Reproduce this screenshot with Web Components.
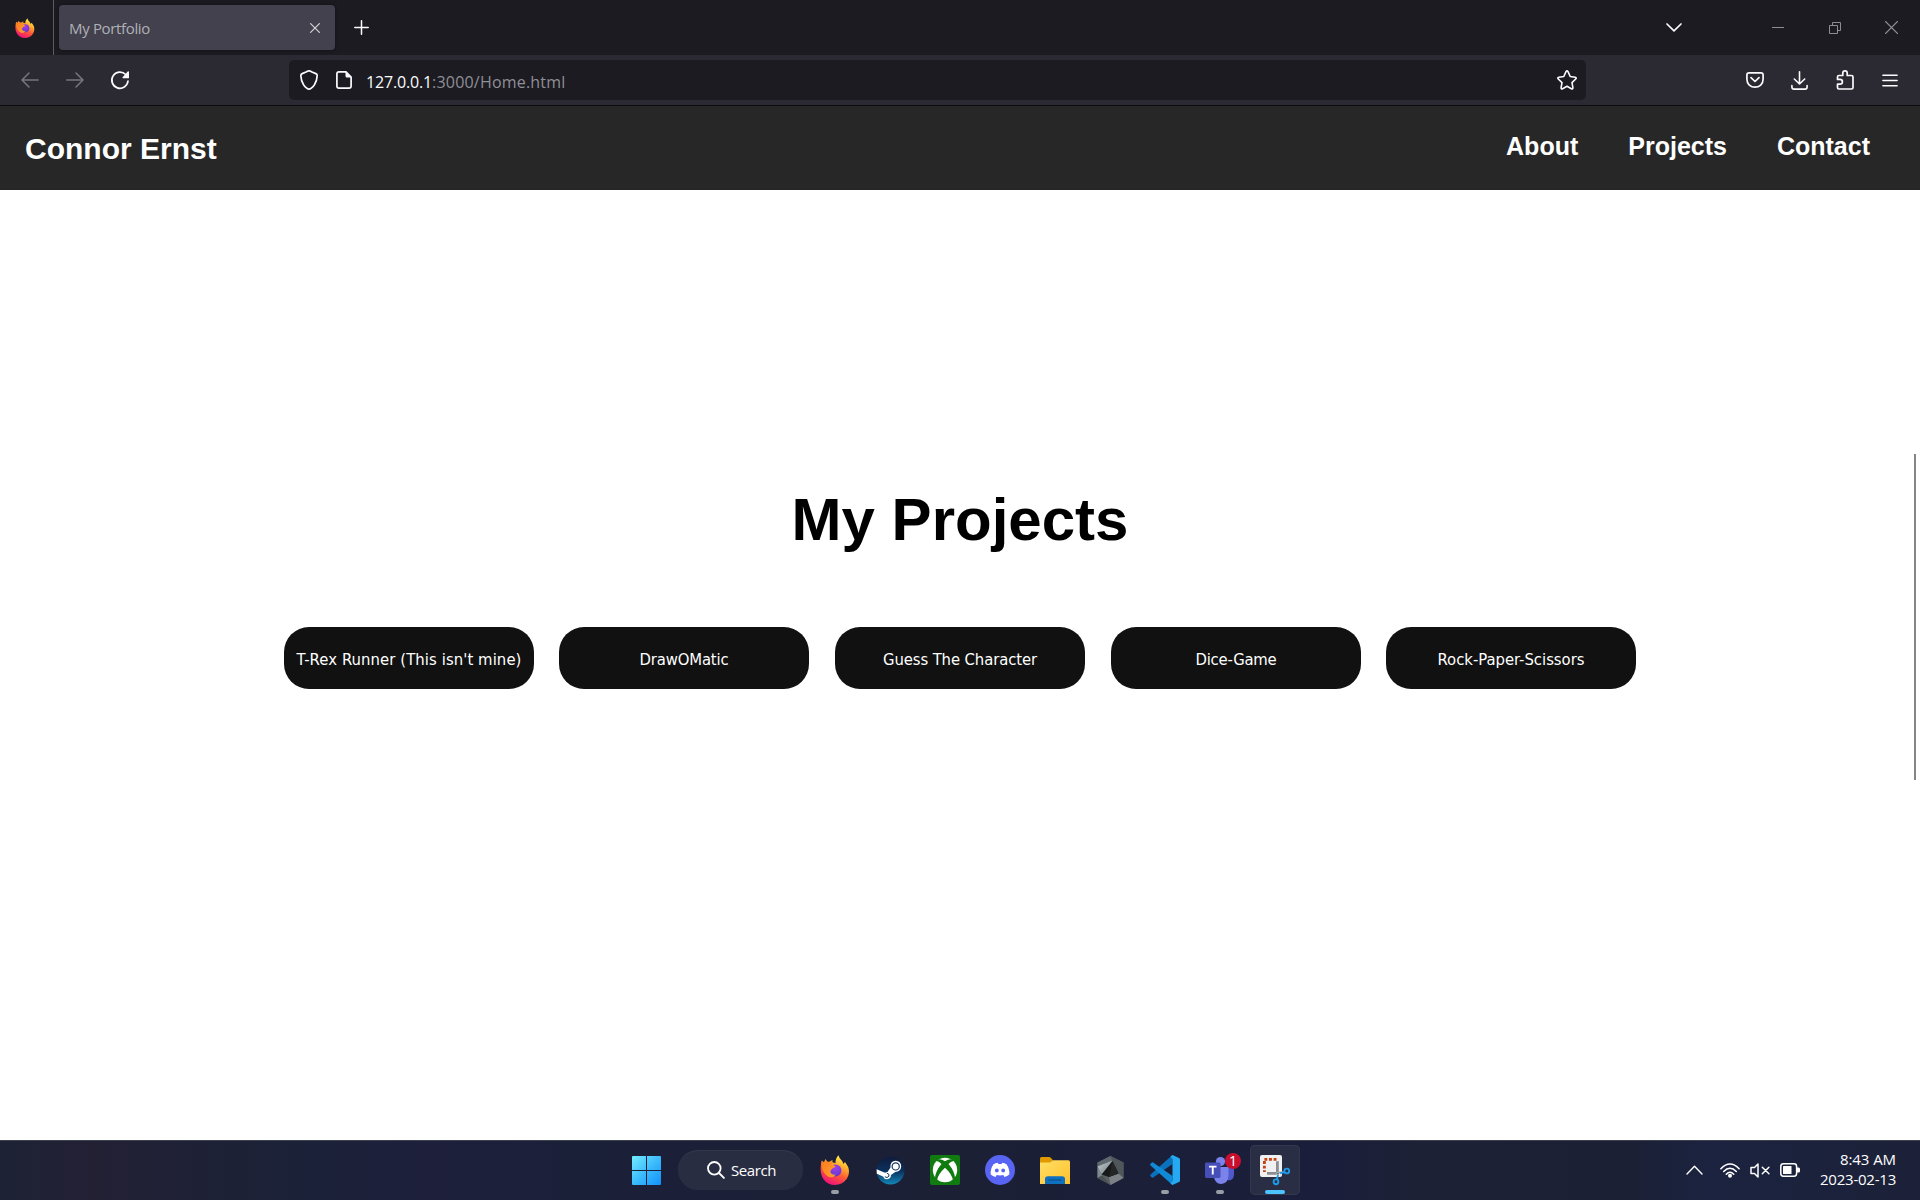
<!DOCTYPE html>
<html lang="en">
<head>
<meta charset="utf-8">
<title>My Portfolio</title>
<style>
html,body{margin:0;height:100%;overflow:hidden;background:#fff}
</style>
</head>
<body>
<desktop-screen></desktop-screen>
<script>
const S = 'fill="none" stroke="currentColor" stroke-linecap="round" stroke-linejoin="round"';
const FIREFOX = `
<defs><linearGradient id="ff" x1=".8" y1=".05" x2=".35" y2="1"><stop offset="0" stop-color="#fff44f"/><stop offset=".3" stop-color="#ffb02e"/><stop offset=".6" stop-color="#ff5a36"/><stop offset="1" stop-color="#f0107a"/></linearGradient>
<radialGradient id="fp" cx=".5" cy=".3" r=".75"><stop offset="0" stop-color="#a33cf0"/><stop offset="1" stop-color="#5b3ac6"/></radialGradient>
<linearGradient id="fo" x1="0" y1="0" x2="1" y2="1"><stop offset="0" stop-color="#ff7a1f"/><stop offset="1" stop-color="#ffa32b"/></linearGradient></defs>
<path fill="url(#ff)" d="M1 9 1.600 5.500 4 7.200 5.500 4 7.500 7Q8.500 6.600 10 6.600L12.300 5 12.500 7.500 15.500 8Q15.300 3.500 18.400 .2Q19.200 3.500 22.300 6.300L23.500 9 25 7 28.200 12Q30.500 18.500 26.500 24.300Q22 30 15 30Q7.500 30 3.300 24Q-.5 18 1 9Z"/>
<circle cx="15.400" cy="15.500" r="6" fill="url(#fp)"/>
<path fill="url(#fo)" d="M1.500 9.500 2 7 4.500 8.200 6 6.500Q8 6.700 10 7.500L12.200 5.800 12 9.200 15.800 11.600 12.500 13.600Q10 15 10.500 17.800Q13.200 20.500 16 19.300Q12.500 24.200 7.500 21.200Q2 17.500 1.500 9.500Z"/>`;
const ICONS = {
 firefox:['0 0 30 30',FIREFOX],
 close:['0 0 10 10',`<path ${S} stroke-width="1.200" d="M.6.6 9.400 9.400M9.400.6.6 9.400"/>`],
 plus:['0 0 15 15',`<path ${S} stroke-width="1.500" d="M7.500.8V14.200M.8 7.500H14.200"/>`],
 chevron:['0 0 16 9',`<path ${S} stroke-width="1.700" d="M1 1 8 7.800 15 1"/>`],
 min:['0 0 12 12',`<path fill="currentColor" d="M0 5h12v1H0z"/>`],
 restore:['0 0 12 12',`<path fill="none" stroke="currentColor" d="M.5 3.500h8v8h-8zM3.500 3.500v-3h8v8h-3"/>`],
 winclose:['0 0 13 13',`<path ${S} stroke-width="1.100" d="M.5.5 12.500 12.500M12.500.5.5 12.500"/>`],
 back:['0 0 18 16',`<path ${S} stroke-width="1.500" d="M17.200 8H1M8 1 1 8 8 15"/>`],
 forward:['0 0 18 16',`<path ${S} stroke-width="1.500" d="M.8 8H17M10 1 17 8 10 15"/>`],
 reload:['0 0 18 18',`<path ${S} stroke-width="1.700" d="M14.700 3.500A8.100 8.100 0 1 0 17 10"/><path fill="currentColor" d="M18 .8V6.700Q18 7.300 17.300 7.300H12Q11 7 11.600 6.200L16.700.6Q17.800-.1 18 .8Z"/>`],
 shield:['0 0 18 20',`<path ${S} stroke-width="1.700" d="M9 .9Q10 .9 12 2L15.800 3.600Q17.200 4.200 17.200 5.500Q17 11 14.300 15Q11.200 19.100 9 19.100T3.700 15Q1 11 .8 5.500Q.8 4.200 2.200 3.600L6 2Q8 .9 9 .9Z"/>`],
 page:['0 0 16 18',`<path ${S} stroke-width="1.700" d="M10 .9H3Q.9.9.9 3V15Q.9 17.100 3 17.100H13Q15.100 17.100 15.100 15V6Z"/><path fill="currentColor" d="M9.500.6 15.500 6.500H11Q9.500 6.500 9.500 5Z"/>`],
 star:['0 0 20 20',`<path ${S} stroke-width="1.600" d="M9 1.600Q10 .2 11 1.600L13.200 6.500 18.200 7.200Q19.900 7.800 18.700 9L15 12.600 15.900 17.700Q15.900 19.300 14.400 18.700L10 16.300 5.600 18.700Q4 19.300 4.100 17.700L5 12.600 1.300 9Q.1 7.800 1.800 7.200L6.800 6.500Z"/>`],
 pocket:['0 0 18 16',`<path ${S} stroke-width="1.700" d="M3 .9H15Q17.100.9 17.100 3V7Q17.100 11 14.700 13.100T9 15.200 3.300 13.100 .9 7V3Q.9.9 3 .9Z"/><path ${S} stroke-width="1.700" d="M5 5.700 9 9.500 13 5.700"/>`],
 download:['0 0 17 19',`<path ${S} stroke-width="1.600" d="M8.500.8V13M3.300 8 8.500 13 13.700 8M.9 14.500V16Q.9 18.100 3 18.100H14Q16.100 18.100 16.100 16V14.500"/>`],
 puzzle:['0 0 18 20',`<path ${S} stroke-width="1.700" d="M6.800 5.500V3A2.200 2.200 0 0 1 11.200 3V5.500H15.500Q17 5.500 17 7V17.500Q17 19 15.500 19H3Q1.500 19 1.500 17.500V14.200H4A2.300 2.300 0 0 0 4 9.400H1.500V7Q1.500 5.500 3 5.500Z"/>`],
 menu:['0 0 16 13',`<path ${S} stroke-width="1.500" d="M.9 1.200H15.100M.9 6.500H15.100M.9 11.800H15.100"/>`],
 windows:['0 0 29 29',`<defs><linearGradient id="w" gradientUnits="userSpaceOnUse" x1="0" y1="0" x2="29" y2="29"><stop offset="0" stop-color="#74edff"/><stop offset=".5" stop-color="#3cbcfc"/><stop offset="1" stop-color="#1191fa"/></linearGradient></defs><path fill="url(#w)" d="M1 0H14V14H0V1Q0 0 1 0ZM15 0H28Q29 0 29 1V14H15ZM0 15H14V29H1Q0 29 0 28ZM15 15H29V28Q29 29 28 29H15Z"/>`],
 search:['0 0 18 18',`<circle cx="7.300" cy="7.300" r="6.300" ${S} stroke-width="1.800"/><path ${S} stroke-width="1.900" d="M12 12 16.900 16.900"/>`],
 steam:['0 0 29 29',`<defs><linearGradient id="st" x2="0" y2="1"><stop offset="0" stop-color="#101c3c"/><stop offset=".5" stop-color="#0b2f5c"/><stop offset="1" stop-color="#1387b8"/></linearGradient></defs><circle cx="14.500" cy="14.500" r="14" fill="url(#st)"/><path fill="#fff" d="M.6 13.200 9 16.700Q10.300 15.900 11.500 15.900L14.500 11.500Q14 5 19.700 4.800Q25 5.200 25.200 10.400Q24.700 15.800 19.300 15.900L15 19Q15 23 11 23.200Q8 23 7 20.400L.8 17.800Z"/><circle cx="19.700" cy="10.400" r="3.600" fill="#fff" stroke="#173158" stroke-width="1.200"/><path fill="none" stroke="#173158" stroke-width="1" d="M8.800 20.800Q11.200 22.500 12.900 20.300Q13.700 17.700 10.800 17.200"/>`],
 xbox:['0 0 30 30',`<rect width="30" height="30" rx="2" fill="#107c10"/><circle cx="15" cy="15" r="12.200" fill="#fff"/><path fill="#107c10" d="M7.500 4.500Q11 3.500 15 6.200Q19 3.500 22.500 4.500L24 6Q21.500 5.800 18.500 9Q24.500 16 25 23L23 25Q21.500 18.500 15 12.700Q8.500 18.500 7 25L5 23Q5.500 16 11.500 9Q8.500 5.800 6 6Z"/>`],
 discord:['0 0 30 30',`<circle cx="15" cy="15" r="15" fill="#5865f2"/><path fill="#fff" d="M8.500 9.200Q10.500 8 12.700 7.700L13.400 9.100Q15 8.800 16.600 9.100L17.300 7.700Q19.600 8 21.500 9.200Q24.800 14 24.300 19.600Q22.200 21.300 19.500 22L18.300 20.100Q15 21 11.700 20.100L10.500 22Q7.800 21.300 5.700 19.600Q5.200 14 8.500 9.200Z"/><ellipse cx="11.800" cy="15.500" rx="1.900" ry="2.100" fill="#5865f2"/><ellipse cx="18.200" cy="15.500" rx="1.900" ry="2.100" fill="#5865f2"/>`],
 folder:['0 0 30 27',`<defs><linearGradient id="fd" x2="1" y2="1"><stop offset="0" stop-color="#ffdf66"/><stop offset="1" stop-color="#ffc12c"/></linearGradient></defs><path fill="#e09a00" d="M0 1.500Q0 0 1.500 0H9Q10 0 11 1L13 3.300V8H0Z"/><path fill="url(#fd)" d="M0 5.500H9.500Q10.500 5.500 11.500 4.500L13 3.300H28.500Q30 3.300 30 5V27H0Z"/><path fill="#0e70be" d="M5 27V22Q5 19.200 8 19.200H22Q25 19.200 25 22V27Z"/><path stroke="#084d8a" stroke-width="1" d="M8.500 23H21.500"/>`],
 unity:['0 0 27 29',`<defs><linearGradient id="un" x2="1" y2="1"><stop offset="0" stop-color="#c3ced3"/><stop offset="1" stop-color="#6c777c"/></linearGradient></defs><path fill="#596064" d="M13.500 0 26.500 6.500V22L13.500 29 .5 22V6.500Z"/><path fill="#5f686c" d="M.5 6.500 13.500 0 15.500 4.500 .5 11Z"/><path fill="url(#un)" d="M.5 10.500 15.500 4.500 5 19.500Z"/><path fill="#7f898e" d="M.5 11 5 19.500.5 22Z"/><path fill="#4a4f52" d="M5 19.500 13.500 29 .5 22Z"/><path fill="#50575a" d="M26.500 6.500V22L21 17 15.500 4.500 13.500 0Z"/><path fill="#7b8185" d="M21 17 26.500 22 13.500 29 12 21Z"/><path fill="#17191a" d="M15.500 5 21.500 17.500 12 21 4.500 18.500Z"/><path fill="#232627" d="M15.500 5 21.500 17.500 12 21Z"/>`],
 vscode:['0 0 30 30',`<path fill="#0a72bd" d="M22.500 0V9L3.200 22.500Q2.500 23 1.800 22.400L.4 21Q-.2 20.300.5 19.600Z"/><path fill="#1089d6" d="M22.500 30V21L3.200 7.500Q2.500 7 1.800 7.600L.4 9Q-.2 9.700.5 10.400Z"/><path fill="#25a9f2" d="M22.500 0 29 3Q30 3.500 30 4.600V25.400Q30 26.500 29 27L22.500 30 20.500 28.600 22.500 26V4L20.500 1.400Z"/>`],
 teams:['0 0 30 28',`<circle cx="15.500" cy="5.500" r="4.600" fill="#7b83eb"/><circle cx="25" cy="7" r="3.200" fill="#5059c9"/><path fill="#5059c9" d="M20 11H28Q29 11 29 12V18Q29 24 23.500 24.500Q20 24 20 20Z"/><path fill="#7b83eb" d="M9 11H22.500Q23.500 11 23.500 12V20Q23 27.500 16 28Q10 27.500 9 21Z"/><rect y="6.500" width="15.500" height="15.500" rx="1.400" fill="#464eb8"/><path fill="#fff" d="M4 9.800H11.500V11.600H8.700V18.500H6.800V11.600H4Z"/>`],
 snip:['0 0 30 30',`<rect width="22" height="22" rx="2" fill="#f0f0f2"/><path fill="none" stroke="#c8400d" stroke-width="2.800" stroke-dasharray="2.900 1.700" d="M16.500 4.400H4.400V17"/><path fill="#8b8d91" d="M16 6.500 18.800 6V19.800H7V17H16Z"/><path stroke="#a5a8ad" stroke-width="1.600" d="M16 19 17.500 17.500 24 17"/><g fill="none" stroke="#1f9be6" stroke-width="1.900"><circle cx="26.800" cy="16" r="2.400"/><circle cx="16" cy="26.800" r="2.400"/><path d="M24.500 17 20 18.300M17 24.500 18 20"/></g>`],
 up:['0 0 17 10',`<path ${S} stroke-width="1.400" d="M1 9 8.500 1.300 16 9"/>`],
 wifi:['0 0 20 15',`<g ${S} stroke-width="1.600"><path d="M.9 5.700Q10-3.700 19.100 5.700"/><path d="M3.700 8.500Q10 2 16.300 8.500"/><path d="M6.300 11.200Q10 7.300 13.700 11.200"/></g><circle cx="10" cy="12.700" r="2" fill="currentColor"/>`],
 mute:['0 0 20 15',`<path ${S} stroke-width="1.500" d="M8 1 4.500 4.500H1V10.500H4.500L8 14ZM12.300 4.200 18.900 10.800M18.900 4.200 12.300 10.800"/>`],
 battery:['0 0 20 14',`<rect x=".8" y=".8" width="15.800" height="12.400" rx="2.600" ${S} stroke-width="1.500"/><rect x="3" y="3" width="8.500" height="8" rx=".6" fill="currentColor"/><path fill="currentColor" d="M17 4.500H18.700Q20 4.500 20 6V8Q20 9.500 18.700 9.500H17Z"/>`]
};
const define = (name, css, html, after) => customElements.define(name, class extends HTMLElement {
  connectedCallback() {
    if (this.shadowRoot) return;
    const t = document.createElement('template');
    t.innerHTML = `<style>*{box-sizing:border-box}${css}</style>${typeof html === 'function' ? html(this) : html}`;
    this.attachShadow({mode:'open'}).append(t.content.cloneNode(true));
    if (after) after(this);
  }
});

/* Icon: name, w, h; the size is that of the drawn glyph. */
define('ui-icon', ':host{display:block;flex:none}svg{display:block;overflow:visible}', el => {
  const [box, body] = ICONS[el.getAttribute('name')];
  const b = box.split(' ');
  return `<svg viewBox="${box}" width="${el.getAttribute('w') || b[2]}" height="${el.getAttribute('h') || b[3]}">${body}</svg>`;
});

/* Label whose letter spacing is adjusted so that the line takes a given width. */
define('fit-text', ':host{display:block;white-space:pre;flex:none}span{display:inline-block}', '<span><slot></slot></span>', el => {
  const w = +el.getAttribute('w'), s = el.shadowRoot.querySelector('span');
  const natural = s.getBoundingClientRect().width;
  s.style.letterSpacing = (w - natural) / el.textContent.length + 'px';
});

define('browser-tabs', `
:host{display:flex;height:55px;background:#1c1b22;color:#fbfbfe;align-items:stretch}
.fx{width:53px;display:flex;align-items:center;padding-left:15px}
.line{width:1px;background:#5b5b62}
.tab{margin:5px 0 5px 5px;width:276px;border-radius:4px;background:#42414d;display:flex;align-items:center;justify-content:space-between;padding:0 15px 0 10px;color:#b0b0b6;box-shadow:0 0 4px rgba(0,0,0,.4);font:15px/20px "Open Sans","Noto Sans",sans-serif}
.tab ui-icon{color:#d4d4d8}
.new{margin-left:19px;display:flex;align-items:center}
.win{margin-left:auto;display:flex;align-items:center;padding-right:22px;color:#8c8c91}
.win>*{margin-left:45px}.win .last{margin-left:44px}
.win .chev{color:#fbfbfe;margin-right:45px}`,
`<div class="fx"><ui-icon name="firefox" w="20" h="20"></ui-icon></div><div class="line"></div>
<div class="tab"><fit-text w="81">My Portfolio</fit-text><ui-icon name="close"></ui-icon></div>
<div class="new"><ui-icon name="plus"></ui-icon></div>
<div class="win"><ui-icon class="chev" name="chevron"></ui-icon><ui-icon name="min"></ui-icon><ui-icon name="restore"></ui-icon><ui-icon class="last" name="winclose"></ui-icon></div>`);

define('browser-toolbar', `
:host{display:flex;height:51px;background:#2b2a33;border-bottom:1px solid #0c0c0d;color:#fbfbfe;align-items:center;padding:0 22px 0 21px}
.nav{display:flex;gap:27px;align-items:center;width:268px}.off{color:#77767d}
.url{display:flex;align-items:center;width:1297px;height:40px;border-radius:5px;background:#1c1b22;padding:0 9px 0 11px;font:16px/22px "Open Sans","Noto Sans",sans-serif}
.url .page{margin:0 14px 0 18px}.path{color:#8f8f95}.url .star{margin-left:auto}
.host,.path{margin-top:3px}
.tools{margin-left:auto;display:flex;align-items:center;gap:28px}.tools .pk{margin-right:-1px}`,
`<div class="nav"><ui-icon class="off" name="back"></ui-icon><ui-icon class="off" name="forward"></ui-icon><ui-icon name="reload"></ui-icon></div>
<div class="url"><ui-icon name="shield"></ui-icon><ui-icon class="page" name="page"></ui-icon><fit-text class="host" w="66">127.0.0.1</fit-text><fit-text class="path" w="133.500">:3000/Home.html</fit-text><ui-icon class="star" name="star"></ui-icon></div>
<div class="tools"><ui-icon class="pk" name="pocket"></ui-icon><ui-icon name="download"></ui-icon><ui-icon name="puzzle"></ui-icon><ui-icon name="menu"></ui-icon></div>`);

define('site-header', `
:host{display:flex;height:84px;background:#272727;color:#fff;justify-content:space-between;padding:0 50px 0 25px;font:bold 30px/34px "Liberation Sans",Arial,sans-serif}
.name{margin-top:26px}nav{display:flex;gap:50px;font-size:25px;line-height:28px;margin-top:26px}`,
`<div class="name">Connor Ernst</div><nav><span>About</span><span>Projects</span><span>Contact</span></nav>`);

define('project-button', `
:host{display:flex;width:250px;height:62px;border-radius:25px;background:#111;color:#fff;align-items:center;justify-content:center;font:16.500px/20px "DejaVu Sans Condensed","Noto Sans",sans-serif;padding-top:3px;box-sizing:border-box}`,
el => `<fit-text w="${el.getAttribute('w')}">${el.getAttribute('label')}</fit-text>`);

define('projects-section', `
:host{display:flex;flex-direction:column;align-items:center;flex:1;position:relative;font-family:"Liberation Sans",Arial,sans-serif}
h1{margin:296px 0 0;font-size:60px;line-height:68px;color:#000}
.row{display:flex;gap:25px;margin-top:73px}
.mid{margin:0 1px}
.bar{position:absolute;right:4px;top:264px;width:2px;height:326px;background:#858585}`,
`<h1>My Projects</h1><div class="row">
<project-button w="225" label="T-Rex Runner (This isn't mine)"></project-button>
<project-button w="89" label="DrawOMatic"></project-button>
<project-button class="mid" w="154" label="Guess The Character"></project-button>
<project-button w="81" label="Dice-Game"></project-button>
<project-button w="147" label="Rock-Paper-Scissors"></project-button></div><div class="bar"></div>`);

/* Taskbar cell; state is "", "open" or "active". */
define('task-app', `
:host{display:flex;width:50px;height:50px;align-items:center;justify-content:center;position:relative;border-radius:5px}
:host([state=active]){background:#2a2e44;box-shadow:inset 0 0 0 1px #34384c}
:host([state=open])::after,:host([state=active])::after{content:"";position:absolute;bottom:1px;left:21px;width:8px;height:4px;border-radius:2px;background:#9a9ca6}
:host([state=active])::after{left:15px;width:20px;background:#4cc2ff}
b{position:absolute;left:30px;top:8px;width:16px;height:16px;border-radius:50%;background:#c8102e;color:#fff;font:14px/16px "Open Sans",sans-serif;text-align:center}`,
el => `<ui-icon name="${el.getAttribute('icon')}"></ui-icon>${el.hasAttribute('badge') ? `<b>${el.getAttribute('badge')}</b>` : ''}`);

define('task-bar', `
:host{display:flex;height:60px;background:linear-gradient(90deg,#1d2235,#232034 5%,#1f2136 9%,#1b2238 16%,#1d1f3b 22%,#1b2039 30%,#1b2035 50%,#1b1e3b 69%,#1c2135 74%,#1b2035 85%,#1b2340 89%,#1c2138);box-shadow:inset 0 1px #3c424d;color:#fff;font:15px/20px "Open Sans","Noto Sans",sans-serif;align-items:center;box-sizing:border-box;padding:0 24px 0 621px}
.pill{display:flex;align-items:center;width:125px;height:40px;border-radius:20px;background:#292d42;box-shadow:inset 0 1px #33374b;margin:0 7px;padding-left:29px;gap:6px}
.apps{display:flex;gap:5px}
.tray{display:flex;align-items:center;margin-left:auto}
.tray ui-icon{margin-right:10px}.tray .up{margin-right:17px}.tray .bat{margin-right:20px}
.clock{display:flex;flex-direction:column;align-items:flex-end;margin-top:-3px}`,
`<task-app icon="windows"></task-app><div class="pill"><ui-icon name="search"></ui-icon><fit-text w="45">Search</fit-text></div>
<div class="apps"><task-app icon="firefox" state="open"></task-app><task-app icon="steam"></task-app><task-app icon="xbox"></task-app><task-app icon="discord"></task-app><task-app icon="folder"></task-app><task-app icon="unity"></task-app><task-app icon="vscode" state="open"></task-app><task-app icon="teams" state="open" badge="1"></task-app><task-app icon="snip" state="active"></task-app></div>
<div class="tray"><ui-icon class="up" name="up"></ui-icon><ui-icon name="wifi"></ui-icon><ui-icon name="mute"></ui-icon><ui-icon class="bat" name="battery"></ui-icon>
<div class="clock"><fit-text w="56">8:43 AM</fit-text><fit-text w="76">2023-02-13</fit-text></div></div>`);

define('desktop-screen', ':host{display:flex;flex-direction:column;height:1200px;width:1920px;background:#fff}',
`<browser-tabs></browser-tabs><browser-toolbar></browser-toolbar><site-header></site-header><projects-section></projects-section><task-bar></task-bar>`);
</script>
</body>
</html>
